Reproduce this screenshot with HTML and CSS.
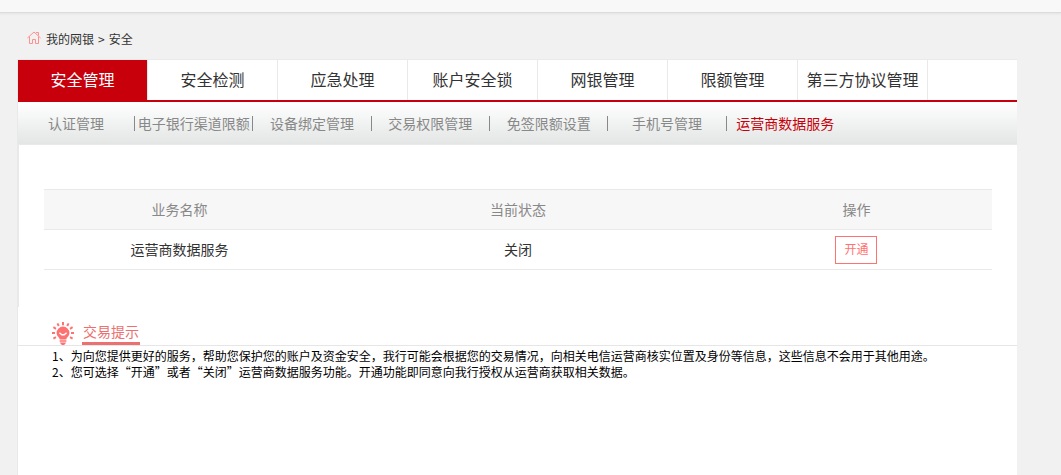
FILE: index.html
```html
<!DOCTYPE html>
<html lang="zh-CN">
<head>
    <meta charset="UTF-8">
    <meta name="viewport" content="width=device-width, initial-scale=1.0">
    <title>运营商数据服务</title>
    <link rel="stylesheet" href="styles.css">
</head>
<body>
    <div class="topbar"></div>

    <div class="page">
        <div class="crumbs">
            <svg class="home-icon" width="14" height="13" viewBox="0 0 14 13" fill="none" stroke="#ff9090">
                <path d="M0.4 7 L7 1 L13.6 7 M2.5 5.5 V12.5 H5.5 V8.5 H8.5 V12.5 H11.5 V5.5 M9 1.5 H11.5 V4.5"/>
            </svg>
            <a href="#">我的网银</a>
            <span>&gt;</span>
            <a href="#">安全</a>
        </div>

        <div class="panel">
            <nav class="tabs">
                <a class="tab active" href="#">安全管理</a>
                <a class="tab" href="#">安全检测</a>
                <a class="tab" href="#">应急处理</a>
                <a class="tab" href="#">账户安全锁</a>
                <a class="tab" href="#">网银管理</a>
                <a class="tab" href="#">限额管理</a>
                <a class="tab" href="#">第三方协议管理</a>
            </nav>

            <nav class="subnav">
                <div class="subnav-list">
                    <a href="#">认证管理</a>
                    <a href="#">电子银行渠道限额</a>
                    <a href="#">设备绑定管理</a>
                    <a href="#">交易权限管理</a>
                    <a href="#">免签限额设置</a>
                    <a href="#">手机号管理</a>
                    <a class="current" href="#">运营商数据服务</a>
                </div>
            </nav>

            <div class="content">
                <table class="services">
                    <colgroup>
                        <col class="col-side">
                        <col>
                        <col class="col-side">
                    </colgroup>
                    <thead>
                        <tr>
                            <th>业务名称</th>
                            <th>当前状态</th>
                            <th>操作</th>
                        </tr>
                    </thead>
                    <tbody>
                        <tr>
                            <td>运营商数据服务</td>
                            <td>关闭</td>
                            <td class="action"><button type="button" class="open-btn">开通</button></td>
                        </tr>
                    </tbody>
                </table>
            </div>

            <div class="tips">
                <div class="tips-head">
                    <svg class="bulb-icon" width="22" height="23" viewBox="0 0 22 23">
                        <path fill="none" stroke="#ff7272" stroke-width="2" d="M11 0 V3.2 M5.4 1.4 L6.8 4 M16.6 1.4 L15.2 4 M1.4 5.2 L4 6.8 M20.6 5.2 L18 6.8 M0 11 H3 M19 11 H22 M1.4 16.6 L4 15.2 M20.6 16.6 L18 15.2"/>
                        <path fill="#ff7272" d="M11 4.6 a6.4 6.4 0 0 1 6.4 6.4 c0 2.6-1.6 3.8-2.6 5 l-.6 1.6 H7.8 l-.6-1.6 c-1-1.2-2.6-2.4-2.6-5 A6.4 6.4 0 0 1 11 4.6z M7.6 18.2 h6.8 v1.6 H7.6z M8 20.4 h6 l-.8 1.6 -1.2 1 h-2 l-1.2-1z"/>
                        <path fill="none" stroke="#fff" stroke-width="1.4" d="M7.4 10.8 L9.8 12.8 H12.2 L14.6 10.8"/>
                    </svg>
                    <h2>交易提示</h2>
                </div>
                <ol>
                    <li>1、为向您提供更好的服务，帮助您保护您的账户及资金安全，我行可能会根据您的交易情况，向相关电信运营商核实位置及身份等信息，这些信息不会用于其他用途。</li>
                    <li>2、您可选择“开通”或者“关闭”运营商数据服务功能。开通功能即同意向我行授权从运营商获取相关数据。</li>
                </ol>
            </div>
        </div>
    </div>
</body>
</html>
```

FILE: styles.css
```css
* {
    box-sizing: border-box;
}

body {
    margin: 0;
    min-height: 100vh;
    display: flex;
    flex-direction: column;
    background-color: #f1f1f1;
    color: #333;
    font-family: "Noto Sans CJK SC", sans-serif;
    font-size: 14px;
}

a {
    color: inherit;
    text-decoration: none;
}

.topbar {
    height: 13px;
    background-color: #f8f8f8;
    border-bottom: 1px solid #dcdcdc;
    box-shadow: 0 1px 2px #e2e2e2;
}

.page {
    flex: 1;
    display: flex;
    flex-direction: column;
    margin: 0 44px 0 17px;
}

.crumbs {
    display: flex;
    align-items: center;
    gap: 4px;
    height: 46px;
    padding: 5px 0 0 10px;
    font-size: 12px;
}

.home-icon {
    margin: 0 1px 2px 0;
}

.panel {
    flex: 1;
    background-color: #fff;
    border-top: 1px solid #e9e9e9;
    border-left: 1px solid #e9e9e9;
}

/* main tabs */
.tabs {
    display: flex;
    height: 42px;
    border-bottom: 2px solid #c7000b;
}

.tab {
    width: 130px;
    border-right: 1px solid #e9e9e9;
    font-size: 16px;
    line-height: 38px;
    text-align: center;
    white-space: nowrap;
}

.tab.active {
    background-color: #c7000b;
    color: #fff;
}

/* second level */
.subnav {
    height: 43px;
    padding: 14px 0;
    background-image: linear-gradient(#fff, #e3e6e5);
    border-bottom: 1px solid #e9e9e9;
}

.subnav-list {
    display: grid;
    grid-template-columns: 116px repeat(6, 1fr);
    max-width: 826px;
    color: #888;
    line-height: 15px;
    text-align: center;
    white-space: nowrap;
}

.subnav-list a + a {
    border-left: 1px solid #888;
}

.subnav-list .current {
    color: #c7000b;
}

.content {
    padding: 44px 25px 37px;
    border-left: 1px solid #e9e9e9;
}

.services {
    width: 100%;
    table-layout: fixed;
    border-collapse: collapse;
    text-align: center;
}

.col-side {
    width: 28.6%;
}

.services th,
.services td {
    height: 40px;
    padding: 0 0 2px;
    border-bottom: 1px solid #e9e9e9;
}

.services th {
    background-color: #f7f7f7;
    border-top: 1px solid #e9e9e9;
    color: #888;
    font-weight: normal;
}

.services .action {
    padding: 0;
}

.open-btn {
    width: 42px;
    height: 28px;
    padding: 0 0 2px;
    background-color: #fff;
    border: 1px solid #ff7272;
    color: #ff7272;
    font-family: inherit;
    font-size: 12px;
    vertical-align: middle;
    cursor: pointer;
}

/* hints under the table */
.tips {
    padding-top: 15px;
    color: #000;
}

.tips-head {
    display: flex;
    align-items: flex-end;
    gap: 8px;
    padding-left: 34px;
    border-bottom: 1px solid #e6e6e6;
}

.tips h2 {
    margin: 0;
    padding: 0 1px 2px;
    border-bottom: 3px solid #ec7070;
    color: #ec7070;
    font-size: 14px;
    font-weight: normal;
    line-height: 18px;
}

.tips ol {
    margin: 0;
    padding: 2px 34px;
    list-style: none;
    font-size: 12px;
    line-height: 16px;
}
```
